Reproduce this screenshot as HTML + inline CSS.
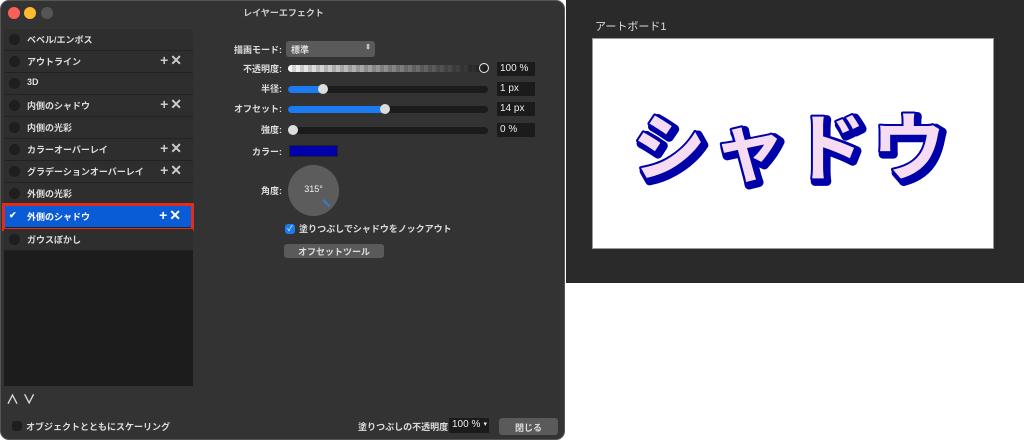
<!DOCTYPE html><html><head><meta charset="utf-8"><style>
*{margin:0;padding:0;box-sizing:border-box}
body{width:1024px;height:440px;background:#fff;position:relative;overflow:hidden;font-family:"Liberation Sans","Noto Sans CJK JP",sans-serif;font-size:9px;color:#ddd}
.win{position:absolute;left:0;top:0;width:565px;height:440px;background:#333;border-radius:9px;border:1px solid #555}
.title{position:absolute;top:5px;left:0;width:565px;text-align:center;font-size:9px;font-weight:bold;color:#ccc}
.dot{position:absolute;top:6px;width:12px;height:12px;border-radius:50%}
.list{position:absolute;left:3px;top:28px;width:189px;height:357px;background:#1c1c1c}
.row{position:absolute;left:0;width:189px;height:22px;background:#2e2e2e;border-bottom:1px solid #222;font-weight:bold;color:#ddd}
.row .c{position:absolute;left:5px;top:5px;width:11px;height:11px;border-radius:50%;background:#1e1e1e}
.row .t{position:absolute;left:23px;top:4px;font-size:9px}
.row .px{position:absolute;right:9px;top:1px;font-size:14px;font-weight:bold;color:#ccc;letter-spacing:2px}
.sel{background:#0a5bd6;outline:3px solid #e32b1c}
.lbl{position:absolute;text-align:right;width:80px;font-weight:bold;color:#ddd}
.track{position:absolute;left:287px;width:200px;height:7px;border-radius:4px;background:#1b1b1b}
.fill{position:absolute;left:0;top:0;height:7px;border-radius:4px;background:#1a7cf0}
.knob{position:absolute;top:-2px;width:10px;height:10px;border-radius:50%;background:#ddd}
.val{position:absolute;left:496px;width:38px;height:14px;background:#1b1b1b;font-size:10px;padding:1px 3px;color:#eee}
</style></head><body>
<div class="win">
<div class="dot" style="left:7px;background:#fe5f57"></div>
<div class="dot" style="left:23px;background:#febc2e"></div>
<div class="dot" style="left:40px;background:#555"></div>
<div class="title">レイヤーエフェクト</div>
<div class="list">
<div class="row" style="top:0"><div class="c"></div><div class="t">ベベル/エンボス</div></div>
<div class="row" style="top:22px"><div class="c"></div><div class="t">アウトライン</div><div class="px">+✕</div></div>
<div class="row" style="top:44px"><div class="c"></div><div class="t">3D</div></div>
<div class="row" style="top:66px"><div class="c"></div><div class="t">内側のシャドウ</div><div class="px">+✕</div></div>
<div class="row" style="top:88px"><div class="c"></div><div class="t">内側の光彩</div></div>
<div class="row" style="top:110px"><div class="c"></div><div class="t">カラーオーバーレイ</div><div class="px">+✕</div></div>
<div class="row" style="top:132px"><div class="c"></div><div class="t">グラデーションオーバーレイ</div><div class="px">+✕</div></div>
<div class="row" style="top:154px"><div class="c"></div><div class="t">外側の光彩</div></div>
<div class="row sel" style="top:177px;left:1px;width:186px;color:#fff"><div class="t" style="left:4px">✔</div><div class="t" style="left:22px">外側のシャドウ</div><div class="px" style="color:#fff;right:8px">+✕</div></div>
<div class="row" style="top:200px"><div class="c"></div><div class="t">ガウスぼかし</div></div>
</div>
<div style="position:absolute;left:5px;top:388px;font-size:13px;color:#ddd;font-weight:bold">∧ ∨</div>
<div style="position:absolute;left:11px;top:420px;width:10px;height:10px;border-radius:3px;background:#1e1e1e"></div>
<div style="position:absolute;left:25px;top:419px;font-weight:bold">オブジェクトとともにスケーリング</div>
<div style="position:absolute;left:357px;top:419px;font-weight:bold">塗りつぶしの不透明度:</div>
<div style="position:absolute;left:448px;top:417px;width:40px;height:15px;background:#1b1b1b;font-size:10px;padding:1px 3px;color:#eee;white-space:nowrap">100 %<span style="position:absolute;right:2px;top:2px;font-size:7px">▾</span></div>
<div style="position:absolute;left:498px;top:417px;width:59px;height:17px;background:#5a5a5a;border-radius:3px;text-align:center;padding-top:3px;font-weight:bold">閉じる</div>

<div class="lbl" style="left:201px;top:42px">描画モード:</div>
<div style="position:absolute;left:285px;top:40px;width:89px;height:16px;background:#5a5a5a;border-radius:3px;font-weight:bold;padding:2px 5px">標準<span style="position:absolute;right:4px;top:2px;font-size:7px">⇕</span></div>
<div class="lbl" style="left:201px;top:61px">不透明度:</div>
<div class="track" style="top:64px;background:repeating-linear-gradient(90deg,#eee 0 4px,#999 4px 8px);"><div style="position:absolute;inset:0;border-radius:4px;background:linear-gradient(90deg,rgba(255,255,255,.6),rgba(20,20,20,.95))"></div><div class="knob" style="left:191px;background:transparent;border:1.5px solid #eee"></div></div>
<div class="val" style="top:61px">100 %</div>
<div class="lbl" style="left:201px;top:81px">半径:</div>
<div class="track" style="top:85px"><div class="fill" style="width:36px"></div><div class="knob" style="left:30px"></div></div>
<div class="val" style="top:81px">1 px</div>
<div class="lbl" style="left:201px;top:101px">オフセット:</div>
<div class="track" style="top:105px"><div class="fill" style="width:98px"></div><div class="knob" style="left:92px"></div></div>
<div class="val" style="top:101px">14 px</div>
<div class="lbl" style="left:201px;top:122px">強度:</div>
<div class="track" style="top:126px"><div class="knob" style="left:0"></div></div>
<div class="val" style="top:122px">0 %</div>
<div class="lbl" style="left:201px;top:144px">カラー:</div>
<div style="position:absolute;left:288px;top:144px;width:49px;height:12px;background:#0000a8;border:1px solid #222"></div>
<div class="lbl" style="left:201px;top:183px">角度:</div>
<div style="position:absolute;left:287px;top:164px;width:51px;height:51px;border-radius:50%;background:#5c5c5c"><div style="position:absolute;width:100%;top:19px;text-align:center;font-size:9px;color:#eee">315°</div><div style="position:absolute;left:34px;top:37px;width:9px;height:1.5px;background:#3a7ad8;transform:rotate(45deg)"></div></div>
<div style="position:absolute;left:284px;top:223px;width:10px;height:10px;border-radius:3px;background:#1a7cf0;color:#fff;font-size:8px;line-height:10px;text-align:center">✓</div>
<div style="position:absolute;left:298px;top:221px;font-weight:bold">塗りつぶしでシャドウをノックアウト</div>
<div style="position:absolute;left:283px;top:243px;width:100px;height:14px;background:#5a5a5a;border-radius:3px;text-align:center;font-weight:bold;padding-top:1px">オフセットツール</div>
</div>
<div style="position:absolute;left:566px;top:0;width:458px;height:283px;background:#2a2a2a"></div>
<div style="position:absolute;left:595px;top:18px;font-size:11px;color:#ddd">アートボード1</div>
<div style="position:absolute;left:592px;top:38px;width:402px;height:211px;background:#fff;border:1px solid #999"></div>
<svg style="position:absolute;left:592px;top:38px" width="402" height="211">
<text x="203" y="139" text-anchor="middle" font-family="Noto Sans CJK JP,sans-serif" font-weight="700" font-size="74" fill="#0000a8" stroke="#0000a8" stroke-width="9" stroke-linejoin="round" letter-spacing="6">シャドウ</text>
<text x="200" y="136" text-anchor="middle" font-family="Noto Sans CJK JP,sans-serif" font-weight="700" font-size="74" fill="#f6dcf3" stroke="#0000a8" stroke-width="4" stroke-linejoin="round" paint-order="stroke" letter-spacing="6">シャドウ</text>
</svg>
</body></html>
